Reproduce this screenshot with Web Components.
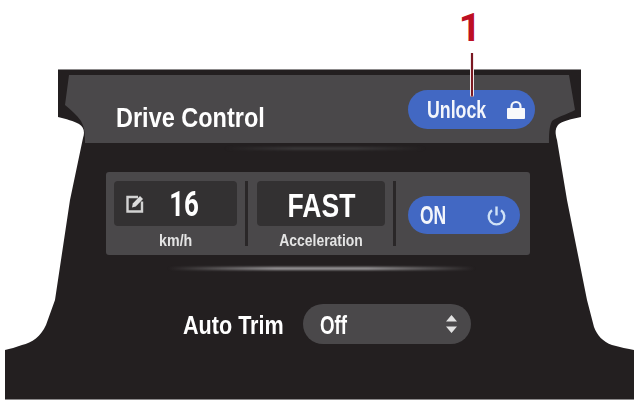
<!doctype html>
<html>
<head>
<meta charset="utf-8">
<style>
  html, body { margin: 0; background: #fff; }
  body { font-family: "Liberation Sans", Arial, sans-serif; }
</style>
</head>
<body>
<drive-screen>
  <call-out slot="callout" number="1"></call-out>
  <drive-header slot="header">
    <squeezed-text slot="title" size="27" squeeze="0.87" origin="left">Drive Control</squeezed-text>
    <blue-pill slot="action" style="--w:127px;--h:39px;--pl:19px;--pr:13px">
      <squeezed-text size="24" squeeze="0.74" origin="left">Unlock</squeezed-text>
      <svg slot="icon" width="18" height="19" viewBox="0 0 18 19">
        <path d="M4.5 10V6.5a4.5 4.5 0 0 1 9 0V10" fill="none" stroke="#f4f6fb" stroke-width="2.2"/>
        <rect x="0" y="8" width="18" height="11" rx="1" fill="#f7f8fb"/>
      </svg>
    </blue-pill>
  </drive-header>
  <soft-rule slot="rule1" left="225" width="200" top="4" peak="#3b393a"></soft-rule>
  <stat-panel slot="panel">
    <stat-cell slot="speed" value="16" caption="km/h" vsize="35" vsqueeze="0.74" vshift="17" vfont="Roboto" csize="16" csqueeze="0.89">
      <svg slot="icon" width="18" height="18" viewBox="0 0 18 18">
        <path d="M12 2H1.5v14.5H16V6.5" fill="none" stroke="#d2d2d2" stroke-width="2.4"/>
        <path d="M6 12.5l.8-4 7.2-7.5 3 3-7.2 7.5z" fill="#dcdcdc"/>
      </svg>
    </stat-cell>
    <stat-cell slot="accel" value="FAST" caption="Acceleration" vsize="34" vsqueeze="0.78" csize="17" csqueeze="0.82"></stat-cell>
    <blue-pill slot="toggle" style="--w:112px;--h:38px;--pl:12px;--pr:13px">
      <squeezed-text size="25" squeeze="0.7" origin="left">ON</squeezed-text>
      <svg slot="icon" width="21" height="21" viewBox="0 0 21 21">
        <path d="M6 5.2a7.8 7.8 0 1 0 9 0" fill="none" stroke="#cfe1f6" stroke-width="2.4"/>
        <path d="M10.5 1.5v9" fill="none" stroke="#cfe1f6" stroke-width="2.4"/>
      </svg>
    </blue-pill>
  </stat-panel>
  <soft-rule slot="rule2" left="168" width="307" top="12" peak="#a09ea0"></soft-rule>
  <trim-row slot="trim" label="Auto Trim" value="Off"></trim-row>
</drive-screen>

<script>
  class SqueezedText extends HTMLElement {
    connectedCallback() {
      const size = this.getAttribute("size") || 16;
      const squeeze = this.getAttribute("squeeze") || 1;
      const origin = this.getAttribute("origin") || "center";
      this.attachShadow({ mode: "open" });
      this.shadowRoot.innerHTML = `
        <style>
          :host { display: inline-block; font-weight: bold; white-space: nowrap; line-height: 1;
                  font-size: ${size}px; transform: scaleX(${squeeze}); transform-origin: ${origin} center; }
        </style>
        <slot></slot>`;
    }
  }
  customElements.define("squeezed-text", SqueezedText);

  class DriveScreen extends HTMLElement {
    connectedCallback() {
      this.attachShadow({ mode: "open" });
      this.shadowRoot.innerHTML = `
        <style>
          :host { display: block; position: relative; width: 637px; height: 401px; overflow: hidden; color: #fff; }
          svg.shape { position: absolute; left: 0; top: 0; }
          .flow { position: relative; display: flex; flex-direction: column; }
          ::slotted([slot=callout]) { height: 69px; }
          ::slotted([slot=header]) { height: 74px; }
          ::slotted([slot=rule1]) { height: 29px; }
          ::slotted([slot=panel]) { height: 83px; }
          ::slotted([slot=rule2]) { height: 49px; }
          ::slotted([slot=trim]) { height: 40px; }
        </style>
        <svg class="shape" width="637" height="401" viewBox="0 0 637 401">
          <path d="M58 69H581V117C572 119 562 121 558 125C555 129 555 133 557 140L567 200L587 300L594 327C597 335 603 342 612 345C620 347 628 349 634 350V399H5V350C10 349 16 347 22 345C32 343 41 336 46 325L55 300L70 200L83 138C85 132 84 127 79 124C74 121 66 119 58 117Z" fill="#231f20"/>
          <path d="M58 69.5H581" stroke="#8c8a8b" stroke-width="1"/>
          <path d="M5 399.5H634" stroke="#8c8a8b" stroke-width="1"/>
          <path d="M69 75H569L575 110C568 114 557 117 552 121C549 127 549 135 549 143H85C85 136 85 128 81 121C77 115 71 110 65 105Z" fill="#4a484a"/>
        </svg>
        <div class="flow">
          <slot name="callout"></slot>
          <slot name="header"></slot>
          <slot name="rule1"></slot>
          <slot name="panel"></slot>
          <slot name="rule2"></slot>
          <slot name="trim"></slot>
        </div>`;
    }
  }
  customElements.define("drive-screen", DriveScreen);

  class CallOut extends HTMLElement {
    connectedCallback() {
      this.attachShadow({ mode: "open" });
      this.shadowRoot.innerHTML = `
        <style>
          :host { display: block; position: relative; z-index: 2; }
          .num { position: absolute; left: 470px; top: 9px; transform: translateX(-50%);
                 font: bold 39px/39px Roboto, "Liberation Sans", sans-serif; color: #bd0f23; }
          .line { position: absolute; left: 470px; top: 53px; width: 1.6px; height: 44px; background: #7b1822;
                  border: solid #efe9ea; border-width: 0 1px; border-radius: 0 0 2px 2px; }
        </style>
        <div class="num">${this.getAttribute("number")}</div>
        <div class="line"></div>`;
    }
  }
  customElements.define("call-out", CallOut);

  class DriveHeader extends HTMLElement {
    connectedCallback() {
      this.attachShadow({ mode: "open" });
      this.shadowRoot.innerHTML = `
        <style>
          :host { display: block; }
          .row { display: flex; justify-content: space-between; align-items: flex-start; padding: 21px 102px 0 116px; }
          .title { padding-top: 15px; }
        </style>
        <div class="row">
          <div class="title"><slot name="title"></slot></div>
          <slot name="action"></slot>
        </div>`;
    }
  }
  customElements.define("drive-header", DriveHeader);

  class BluePill extends HTMLElement {
    connectedCallback() {
      this.attachShadow({ mode: "open" });
      this.shadowRoot.innerHTML = `
        <style>
          :host { display: flex; align-items: center; justify-content: space-between; box-sizing: border-box;
                  width: var(--w); height: var(--h); padding: 1px var(--pr) 0 var(--pl); border-radius: 20px;
                  background: #4268c3; color: #f4f6fb; }
          ::slotted(svg) { display: block; flex: none; margin-top: -1px; }
        </style>
        <slot></slot>
        <slot name="icon"></slot>`;
    }
  }
  customElements.define("blue-pill", BluePill);

  class SoftRule extends HTMLElement {
    connectedCallback() {
      const left = this.getAttribute("left");
      const width = this.getAttribute("width");
      const top = this.getAttribute("top");
      const peak = this.getAttribute("peak");
      this.attachShadow({ mode: "open" });
      this.shadowRoot.innerHTML = `
        <style>
          :host { display: block; }
          div { margin: ${top}px 0 0 ${left}px; width: ${width}px; height: 3px; filter: blur(.8px);
                background: linear-gradient(90deg, transparent, ${peak} 35%, ${peak} 65%, transparent); }
        </style>
        <div></div>`;
    }
  }
  customElements.define("soft-rule", SoftRule);

  class StatPanel extends HTMLElement {
    connectedCallback() {
      this.attachShadow({ mode: "open" });
      this.shadowRoot.innerHTML = `
        <style>
          :host { display: block; }
          .panel { box-sizing: border-box; width: 424px; height: 83px; margin-left: 106px; padding: 9px 10px 0 8px;
                   background: #4a484a; border-radius: 3px; display: flex; align-items: flex-start; }
          .sep { flex: none; width: 3px; height: 65px; margin: 0 9px 0 8px; background: #2a2728; }
          .c1 { width: 123px; }
          .c2 { width: 128px; }
          .c3 { margin: 15px 0 0 3px; }
        </style>
        <div class="panel">
          <div class="c1"><slot name="speed"></slot></div>
          <div class="sep"></div>
          <div class="c2"><slot name="accel"></slot></div>
          <div class="sep"></div>
          <div class="c3"><slot name="toggle"></slot></div>
        </div>`;
    }
  }
  customElements.define("stat-panel", StatPanel);

  class StatCell extends HTMLElement {
    connectedCallback() {
      const a = (n) => this.getAttribute(n);
      this.attachShadow({ mode: "open" });
      this.shadowRoot.innerHTML = `
        <style>
          :host { display: block; }
          .box { position: relative; height: 45px; border-radius: 4px; background: #333132;
                 display: flex; align-items: center; justify-content: center; }
          .icon { position: absolute; left: 12px; top: 14px; }
          .val { display: block; margin-left: ${a("vshift") || 0}px; margin-top: 2px; }
          .cap { text-align: center; padding-top: 6px; color: #e4e4e4; }
        </style>
        <div class="box">
          <div class="icon"><slot name="icon"></slot></div>
          <div class="val" style="font-family:${a("vfont") || "inherit"}">
            <squeezed-text size="${a("vsize")}" squeeze="${a("vsqueeze")}">${a("value")}</squeezed-text>
          </div>
        </div>
        <div class="cap"><squeezed-text size="${a("csize")}" squeeze="${a("csqueeze")}">${a("caption")}</squeezed-text></div>`;
    }
  }
  customElements.define("stat-cell", StatCell);

  class TrimRow extends HTMLElement {
    connectedCallback() {
      this.attachShadow({ mode: "open" });
      this.shadowRoot.innerHTML = `
        <style>
          :host { display: block; }
          .row { display: flex; align-items: center; height: 40px; padding-left: 183px; }
          .label { width: 120px; margin-top: 2px; }
          .select { box-sizing: border-box; width: 168px; height: 40px; border-radius: 20px; background: #4a484a;
                    display: flex; align-items: center; justify-content: space-between; padding: 2px 13px 0 17px; }
          svg { display: block; margin-top: -2px; }
        </style>
        <div class="row">
          <div class="label"><squeezed-text size="26" squeeze="0.83" origin="left">${this.getAttribute("label")}</squeezed-text></div>
          <div class="select">
            <squeezed-text size="25" squeeze="0.75" origin="left">${this.getAttribute("value")}</squeezed-text>
            <svg width="13" height="18" viewBox="0 0 13 18"><path d="M6.5 0l5.5 6.5H1zM6.5 18l5.5-6.5H1z" fill="#e2e2e2"/></svg>
          </div>
        </div>`;
    }
  }
  customElements.define("trim-row", TrimRow);
</script>
</body>
</html>
